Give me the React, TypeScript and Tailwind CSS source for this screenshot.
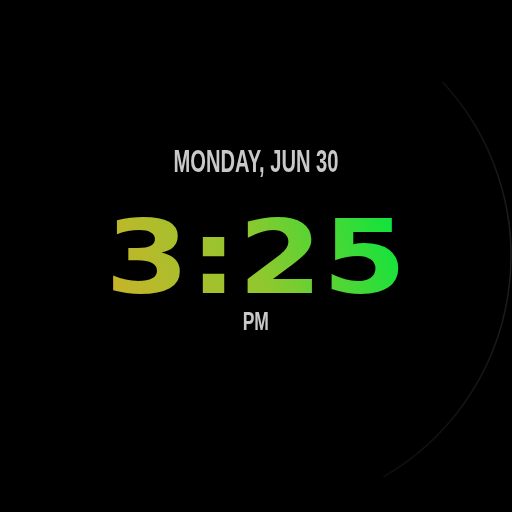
import React from 'react';

const arcPath = (() => {
  const cx = 256;
  const cy = 256;
  const r = 255;
  const a0 = (-43 * Math.PI) / 180;
  const a1 = (60 * Math.PI) / 180;
  const x0 = cx + r * Math.cos(a0);
  const y0 = cy + r * Math.sin(a0);
  const x1 = cx + r * Math.cos(a1);
  const y1 = cy + r * Math.sin(a1);
  return `M ${x0} ${y0} A ${r} ${r} 0 0 1 ${x1} ${y1}`;
})();

const App: React.FC = () => {
  return (
    <div className="relative w-[512px] h-[512px] bg-black overflow-hidden">
      <svg className="absolute inset-0" width="512" height="512" viewBox="0 0 512 512">
        <defs>
          <linearGradient id="ring" x1="0" y1="0" x2="0" y2="1">
            <stop offset="0" stopColor="#101010" />
            <stop offset="0.45" stopColor="#1f1f1f" />
            <stop offset="1" stopColor="#0e0e0e" />
          </linearGradient>
        </defs>
        <path d={arcPath} fill="none" stroke="url(#ring)" strokeWidth="1.5" />
      </svg>

      <div className="relative flex flex-col items-center pt-[145px]">
        <div
          className="inline-block scale-x-[0.63] text-[32px] leading-none font-bold text-[#c9c9c9] whitespace-nowrap"
          style={{ fontFamily: '"Liberation Sans", Arial, sans-serif' }}
        >
          MONDAY, JUN 30
        </div>

        <div
          className="mt-[40px] inline-block scale-x-[1.19] text-[102px] leading-[0.8] font-bold whitespace-nowrap bg-[linear-gradient(72deg,#c4b52a_5%,#8fc82e_50%,#10e43c_95%)] bg-clip-text text-transparent"
          style={{ fontFamily: '"DejaVu Sans", sans-serif' }}
        >
          3:25
        </div>

        <div
          className="mt-[10px] inline-block scale-x-[0.7] text-[25px] leading-none font-bold text-[#c9c9c9]"
          style={{ fontFamily: '"Liberation Sans", Arial, sans-serif' }}
        >
          PM
        </div>
      </div>
    </div>
  );
};

export default App;
